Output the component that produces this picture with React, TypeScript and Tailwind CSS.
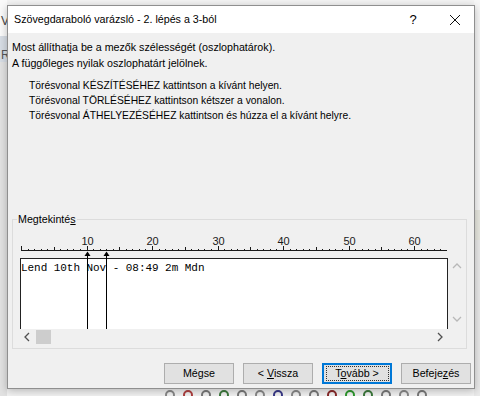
const ui = "font-['Liberation_Sans',Arial,sans-serif]";
const mono = "font-['Liberation_Mono','Courier_New',monospace]";

const CH = 6.55;
const colX = (i: number) => Math.round(1 + i * CH) + 0.5;

const Ruler = () => {
  const cols = Array.from({ length: 65 }, (_, i) => i);
  return (
    <svg width="428" height="26" className="block">
      <line x1={1} y1={18.5} x2={427} y2={18.5} stroke="#1a1a1a" />
      {cols.map((i) => {
        const h = i % 10 === 0 ? 4 : i % 5 === 0 ? 3 : 1;
        return (
          <line key={i} x1={colX(i)} x2={colX(i)} y1={18} y2={18 - h} stroke="#1a1a1a" />
        );
      })}
      {[10, 20, 30, 40, 50, 60].map((n) => (
        <text
          key={n}
          x={colX(n)}
          y={13}
          fontSize="11"
          textAnchor="middle"
          fill="#1a1a1a"
          fontFamily="Liberation Sans, Arial, sans-serif"
        >
          {n}
        </text>
      ))}
    </svg>
  );
};

const BreakLines = () => (
  <svg width="428" height="97" className="absolute left-0 top-0 pointer-events-none">
    {[10, 13].map((c) => {
      const x = colX(c);
      return (
        <g key={c}>
          <line x1={x} x2={x} y1={21} y2={97} stroke="#000" />
          <polygon points={`${x},19.5 ${x - 3},24 ${x + 3},24`} fill="#000" />
        </g>
      );
    })}
  </svg>
);

const Chevron = ({ dir, color }: { dir: 'up' | 'down' | 'left' | 'right'; color: string }) => {
  const pts = {
    up: '1,6 5,2 9,6',
    down: '1,2 5,6 9,2',
    left: '6,1 2,5 6,9',
    right: '3,1 7,5 3,9'
  }[dir];
  return (
    <svg width="10" height="10" className="block">
      <polyline points={pts} fill="none" stroke={color} strokeWidth="1.3" />
    </svg>
  );
};

const Btn = ({ children, focused }: { children: React.ReactNode; focused?: boolean }) => (
  <div
    className={`w-[70px] h-[21px] flex items-center justify-center bg-[#e1e1e1] text-[10.7px] text-[#000] ${
      focused ? 'border-2 border-[#0078d7]' : 'border border-[#adadad]'
    }`}
  >
    {focused ? (
      <div className="w-[63px] h-[15px] flex items-center justify-center border border-dotted border-[#333]">
        <span>{children}</span>
      </div>
    ) : (
      <span>{children}</span>
    )}
  </div>
);

const dots = ['#8a8a8a', '#b04040', '#7a7a7a', '#3d7a3d', '#7a7a7a', '#8a8a8a', '#3a3a8a', '#8a8a8a', '#7a7a7a', '#8a2a2a', '#2e9a2e', '#3d7a3d', '#7a7a7a', '#8a8a8a', '#7a7a7a'];

export default function App() {
  return (
    <div className={`w-[480px] h-[396px] relative overflow-hidden bg-[#f3f3f3] ${ui}`}>
      {/* excel behind */}
      <div className="absolute left-0 top-0 w-[7px] h-[396px] flex flex-col bg-[#e2e2e2]">
        <div className="h-[36px] bg-[#fafafa] text-[12px] text-[#444] pt-[12px] pl-[1px]">V</div>
        <div className="h-[12px] bg-[#d7dde5]" />
        <div className="h-[14px] bg-[#d7dde5] text-[12px] text-[#555] pl-[1px] leading-[14px]">R</div>
      </div>
      <div className="absolute left-[474px] top-0 w-[6px] h-[396px] bg-[#eaeaea] flex flex-col">
        <div className="h-[210px] bg-[#f7f7f7]" />
        <div className="h-[30px] bg-[#e8e8e0]" />
      </div>
      <div className="absolute left-[165px] top-[390px] flex gap-[8px]">
        {dots.map((c, i) => (
          <div key={i} className="w-[10px] h-[10px] rounded-full border-2" style={{ borderColor: c }} />
        ))}
      </div>

      {/* dialog */}
      <div className="absolute left-[7px] top-[5px] w-[468px] h-[384px] border border-[#8f8f8f] bg-[#f0f0f0] shadow-[0_2px_8px_rgba(0,0,0,0.25)] flex flex-col">
        <div className="h-[27px] bg-white flex items-center pl-[6px] text-[10.7px] text-[#000]">
          <span className="flex-1">Szövegdaraboló varázsló - 2. lépés a 3-ból</span>
          <span className="w-[20px] text-center text-[13px] mr-[26px]">?</span>
          <svg width="12" height="12" className="mr-[13px]">
            <line x1="1" y1="1" x2="11" y2="11" stroke="#111" strokeWidth="1" />
            <line x1="11" y1="1" x2="1" y2="11" stroke="#111" strokeWidth="1" />
          </svg>
        </div>

        <div className="pt-[6px] pl-[4px] text-[10.7px] leading-[16px] text-[#000]">
          <div>Most állíthatja be a mezők szélességét (oszlophatárok).</div>
          <div>A függőleges nyilak oszlophatárt jelölnek.</div>
        </div>
        <div className="mt-[7px] pl-[21px] text-[10.3px] leading-[15px] text-[#000]">
          <div>Törésvonal KÉSZÍTÉSÉHEZ kattintson a kívánt helyen.</div>
          <div>Törésvonal TÖRLÉSÉHEZ kattintson kétszer a vonalon.</div>
          <div>Törésvonal ÁTHELYEZÉSÉHEZ kattintson és húzza el a kívánt helyre.</div>
        </div>

        {/* group box */}
        <div className="relative ml-[4px] mt-[96px] w-[455px] h-[130px] border border-[#dcdcdc] pl-[7px] pt-[12px]">
          <span className="absolute left-[4px] -top-[8px] bg-[#f0f0f0] px-[1px] text-[10.7px] leading-[14px] text-[#000]">
            Megtekinté<span className="underline">s</span>
          </span>
          <div className="relative w-[445px]">
            <Ruler />
            <div className="flex">
              <div className="w-[428px] h-[71px] bg-white border-l border-t border-r border-[#222] pt-[3px]">
                <div className={`${mono} text-[11px] leading-[13px] tracking-[-0.05px] text-[#000] whitespace-pre`}>
                  Lend 10th Nov - 08:49 2m Mdn
                </div>
              </div>
              <div className="w-[17px] h-[71px] flex flex-col items-center justify-between py-[4px]">
                <Chevron dir="up" color="#b8b8b8" />
                <Chevron dir="down" color="#b8b8b8" />
              </div>
            </div>
            <div className="w-[428px] h-[16px] flex items-center">
              <div className="w-[16px] flex justify-center">
                <Chevron dir="left" color="#505050" />
              </div>
              <div className="w-[15px] h-[14px] bg-[#cdcdcd]" />
              <div className="flex-1" />
              <div className="w-[16px] flex justify-center">
                <Chevron dir="right" color="#505050" />
              </div>
            </div>
            <BreakLines />
          </div>
        </div>

        <div className="mt-[14px] flex justify-end gap-[9px] pr-[3px]">
          <Btn>Mégse</Btn>
          <Btn>
            {'< '}
            <span className="underline">V</span>issza
          </Btn>
          <Btn focused>
            T<span className="underline">o</span>
            {'vább >'}
          </Btn>
          <Btn>
            Befeje<span className="underline">z</span>és
          </Btn>
        </div>
      </div>
    </div>
  );
}
